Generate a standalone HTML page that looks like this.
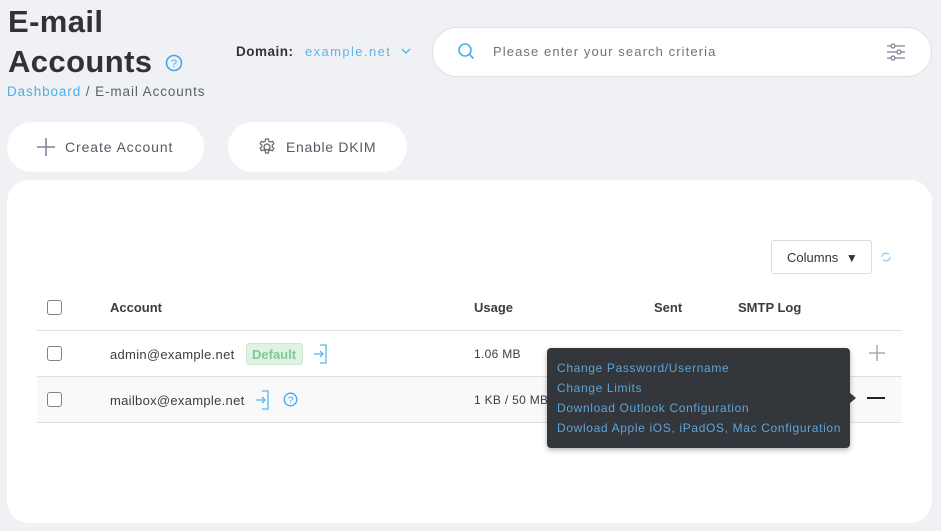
<!DOCTYPE html>
<html><head><style>
*{box-sizing:border-box;margin:0;padding:0}
body{width:941px;height:531px;background:#f0f1f5;font-family:"Liberation Sans",sans-serif;position:relative;overflow:hidden;color:#333}
.abs{position:absolute}
h1{position:absolute;left:8px;top:2px;font-size:31px;line-height:40px;font-weight:bold;color:#303236;letter-spacing:0.4px}
.btn{position:absolute;top:122px;height:50px;background:#fff;border-radius:25px;font-size:14px;color:#555b66;display:flex;align-items:center}
.panel{position:absolute;left:7px;top:180px;width:925px;height:343px;background:#fff;border-radius:22px}
.cb{position:absolute;width:15px;height:15px;border:1.3px solid #7a8294;border-radius:3px;background:#fff}
.line{position:absolute;left:37px;width:865px;height:1px;background:#dfe0e2}
.t{position:absolute;font-size:13px;color:#3b3d40;letter-spacing:0.3px}
.menu{position:absolute;left:547px;top:348px;width:303px;height:100px;background:#33363a;border-radius:4px;box-shadow:0 2px 6px rgba(0,0,0,.3)}
.menu div{position:absolute;left:10px;font-size:12px;color:#5da4d9;letter-spacing:0.65px}
</style></head><body>
<h1>E-mail<br>Accounts</h1>
<svg class="abs" style="left:165px;top:54px" width="18" height="18" viewBox="0 0 18 18"><circle cx="9" cy="9" r="7.5" fill="none" stroke="#3ea8ea" stroke-width="1.6"/><text x="9" y="13" font-size="11" text-anchor="middle" fill="#3ea8ea" font-family="Liberation Sans">?</text></svg>
<div class="abs" style="left:7px;top:84px;font-size:13.5px;color:#5b606b;letter-spacing:0.9px"><span style="color:#4aaeea">Dashboard</span> / E-mail Accounts</div>
<div class="abs" style="left:236px;top:44px;font-size:13.5px;font-weight:bold;color:#333;letter-spacing:0.5px">Domain:</div>
<div class="abs" style="left:305px;top:44px;font-size:13px;color:#5cb5ee;letter-spacing:1.4px">example.net</div>
<svg class="abs" style="left:400px;top:46px" width="12" height="10"><path d="M2 3l4 4 4-4" fill="none" stroke="#5cb5ee" stroke-width="1.5"/></svg>
<div class="abs" style="left:432px;top:27px;width:500px;height:50px;background:#fff;border-radius:25px;border:1px solid #dde0e6"></div>
<svg class="abs" style="left:457px;top:42px" width="20" height="20"><circle cx="8" cy="8" r="6" fill="none" stroke="#4aaeea" stroke-width="1.6"/><path d="M12.5 12.5l4 4" stroke="#4aaeea" stroke-width="1.6"/></svg>
<div class="abs" style="left:493px;top:44px;font-size:13px;color:#6f737b;letter-spacing:1.1px">Please enter your search criteria</div>
<svg class="abs" style="left:885px;top:41px" width="22" height="22" stroke="#7a8294" stroke-width="1.3" fill="#fff"><path d="M2 5h18M2 11h18M2 17h18"/><circle cx="8" cy="5" r="2"/><circle cx="14" cy="11" r="2"/><circle cx="8" cy="17" r="2"/></svg>
<div class="btn" style="left:7px;width:197px;letter-spacing:0.9px"><svg style="margin-left:29px;margin-right:9px" width="20" height="20"><path d="M10 1v18M1 10h18" stroke="#7a8294" stroke-width="1.5"/></svg>Create Account</div>
<div class="btn" style="left:228px;width:179px;letter-spacing:0.7px"><svg style="margin-left:29px;margin-right:9px" width="20" height="20" viewBox="0 0 20 20"><circle cx="10" cy="10" r="3" fill="none" stroke="#666" stroke-width="1.3"/><path d="M8.6 2h2.8l.4 2.2 1.6.9 2.1-.8 1.4 2.4-1.7 1.5v1.6l1.7 1.5-1.4 2.4-2.1-.8-1.6.9-.4 2.2H8.6l-.4-2.2-1.6-.9-2.1.8-1.4-2.4 1.7-1.5V8.2L3.1 6.7l1.4-2.4 2.1.8 1.6-.9z" fill="none" stroke="#666" stroke-width="1.2"/></svg>Enable DKIM</div>
<div class="panel"></div>
<div class="abs" style="left:771px;top:240px;width:101px;height:34px;border:1px solid #dcdde0;border-radius:3px;background:#fff;font-size:13px;color:#333;padding:9px 0 0 15px">Columns <span style="font-size:12px;margin-left:4px">▼</span></div>
<svg class="abs" style="left:880px;top:251px" width="12" height="12"><path d="M2 6a4 4 0 0 1 7-2.5M10 6a4 4 0 0 1-7 2.5" fill="none" stroke="#8cc8ee" stroke-width="1.2"/></svg>
<div class="cb" style="left:47px;top:300px"></div>
<div class="t" style="left:110px;top:300px;font-weight:bold;letter-spacing:0">Account</div>
<div class="t" style="left:474px;top:300px;font-weight:bold;letter-spacing:0">Usage</div>
<div class="t" style="left:654px;top:300px;font-weight:bold;letter-spacing:0">Sent</div>
<div class="t" style="left:738px;top:300px;font-weight:bold;letter-spacing:0">SMTP Log</div>
<div class="line" style="top:330px"></div>
<div class="abs" style="left:37px;top:377px;width:865px;height:45px;background:#f9f9f9"></div>
<div class="line" style="top:376px"></div>
<div class="line" style="top:422px"></div>
<div class="cb" style="left:47px;top:346px"></div>
<div class="t" style="left:110px;top:347px">admin@example.net</div>
<div class="abs" style="left:246px;top:343px;width:57px;height:22px;background:#dff2e4;border:1px solid #cfe6d6;border-radius:3px;font-size:13px;font-weight:bold;color:#7ccb95;padding:3px 0 0 5px">Default</div>
<svg class="abs" style="left:313px;top:344px" width="20" height="20" fill="none" stroke="#56b6f0" stroke-width="1.3"><path d="M7 1h6v18H7M1 10h9M7 7l3 3-3 3"/></svg>
<div class="t" style="left:474px;top:347px;font-size:12px">1.06 MB</div>
<svg class="abs" style="left:868px;top:344px" width="18" height="18"><path d="M9 1v16M1 9h16" stroke="#aaa" stroke-width="1.5"/></svg>
<div class="cb" style="left:47px;top:392px"></div>
<div class="t" style="left:110px;top:393px">mailbox@example.net</div>
<svg class="abs" style="left:255px;top:390px" width="20" height="20" fill="none" stroke="#56b6f0" stroke-width="1.3"><path d="M7 1h6v18H7M1 10h9M7 7l3 3-3 3"/></svg>
<svg class="abs" style="left:283px;top:392px" width="15" height="15"><circle cx="7.5" cy="7.5" r="6.3" fill="none" stroke="#3ea8ea" stroke-width="1.3"/><text x="7.5" y="11.5" font-size="10" text-anchor="middle" fill="#3ea8ea" font-family="Liberation Sans">?</text></svg>
<div class="t" style="left:474px;top:393px;font-size:12px">1 KB / 50 MB</div>
<div class="abs" style="left:867px;top:397px;width:18px;height:2px;background:#222"></div>
<div class="menu">
<div style="top:13px">Change Password/Username</div>
<div style="top:33px">Change Limits</div>
<div style="top:53px">Download Outlook Configuration</div>
<div style="top:73px">Dowload Apple iOS, iPadOS, Mac Configuration</div>
</div>
<div class="abs" style="left:850px;top:393px;width:0;height:0;border-top:5px solid transparent;border-bottom:5px solid transparent;border-left:6px solid #33363a"></div>
</body></html>
